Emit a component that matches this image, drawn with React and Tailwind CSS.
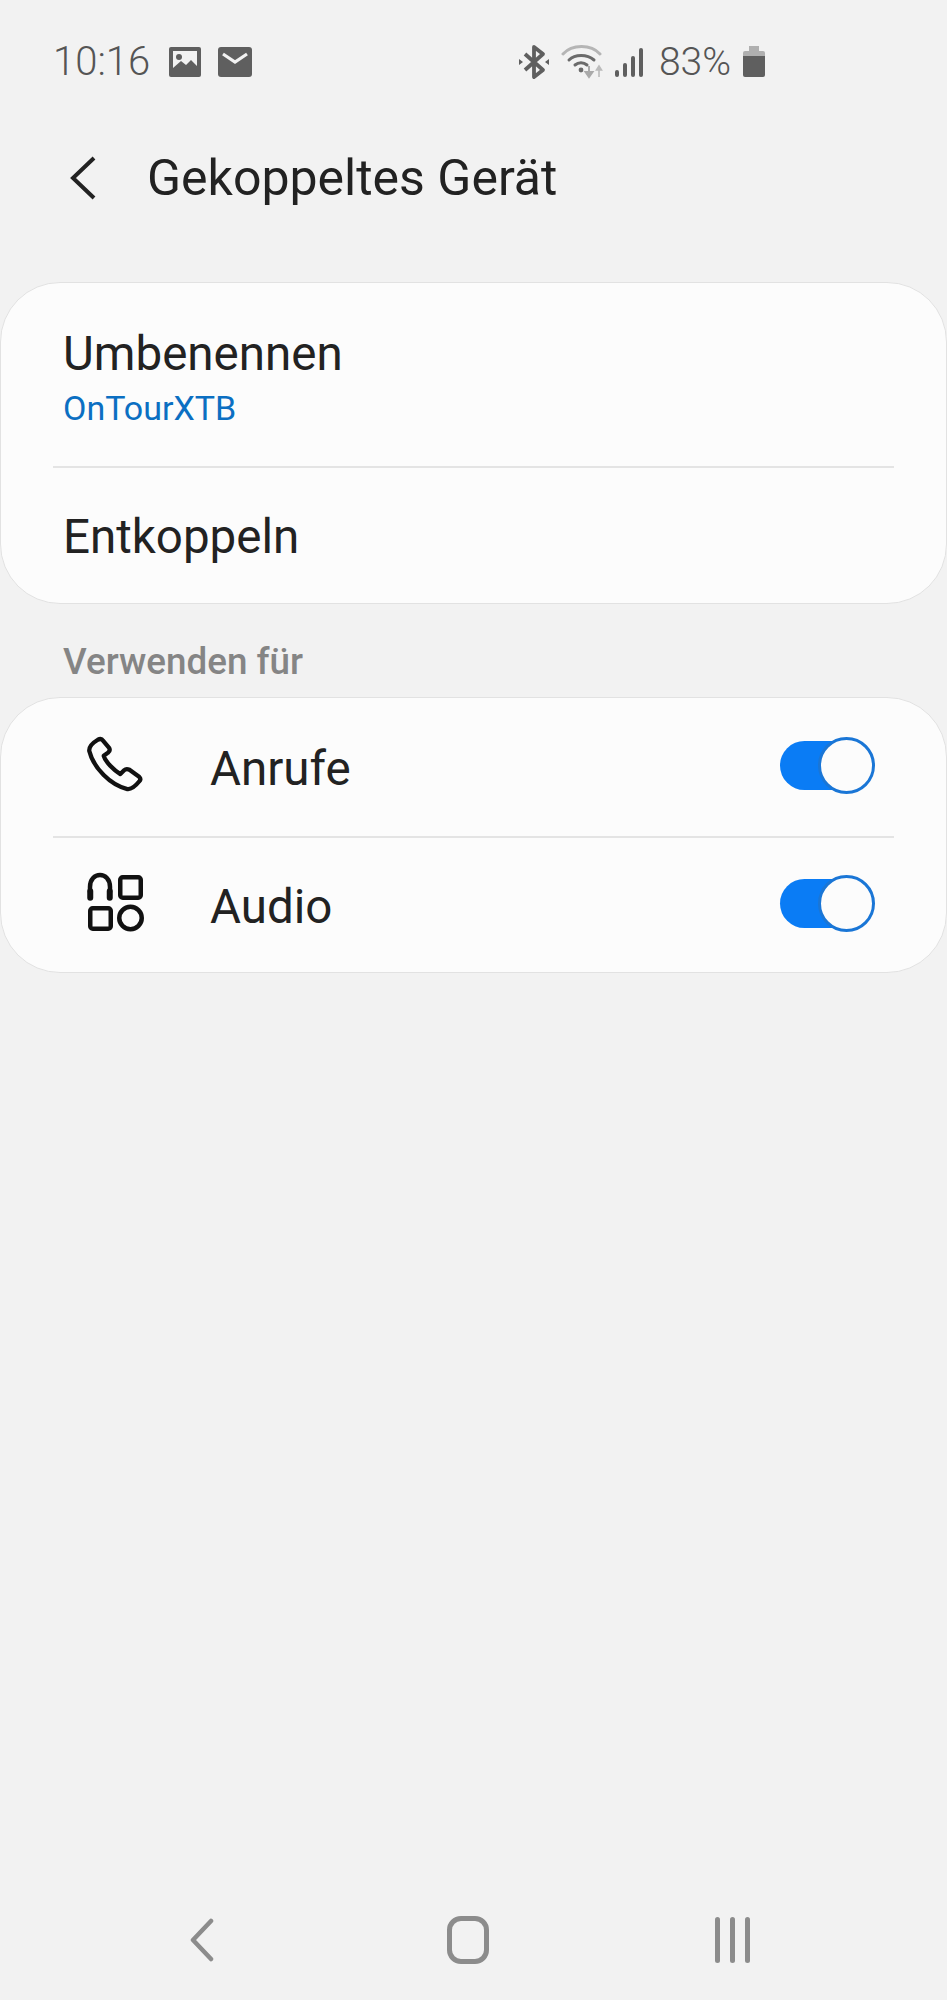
import React from "react";

const Toggle = () => (
  <div className="relative w-[95px] h-[57px] shrink-0 mb-[3px]">
    <div className="absolute left-0 top-[4px] w-[90px] h-[49px] rounded-full bg-[#0a7cf5]" />
    <div className="absolute right-0 top-0 w-[57px] h-[57px] rounded-full bg-[#fcfcfc] border-[3px] border-[#1a76d6]" />
  </div>
);

const PhoneIcon = () => (
  <svg width="60" height="60" viewBox="0 0 56 56" fill="none" stroke="#111" strokeWidth="4" strokeLinejoin="round" strokeLinecap="round">
    <path d="M4 14 C3.5 10 7 6.5 12 3.5 C14 2.5 16 3 17 4.5 L22.5 11 C23.5 13 23 14.5 21.5 15.5 L17.5 18.5 C19 24 27 32 33 35.5 L36.5 32 C38 30.5 39.5 30.5 41.5 31.5 L50.5 38 C52 39.5 52 41 50.5 42.5 C46.5 47.5 43.5 50 39.5 49.5 C24 46 8 30 4 14 Z" />
  </svg>
);

const AudioIcon = () => (
  <svg width="60" height="60" viewBox="0 0 60 60" fill="none" stroke="#111" strokeWidth="4.5" strokeLinejoin="round" strokeLinecap="round">
    <path d="M5 20 V15 C5 -1 25 -1 25 15 V20" />
    <rect x="3" y="17" width="4.5" height="11" rx="2.2" fill="#111" strokeWidth="1.5" />
    <rect x="22.5" y="17" width="4.5" height="11" rx="2.2" fill="#111" strokeWidth="1.5" />
    <rect x="35.25" y="5.25" width="20.5" height="20.5" rx="2.5" />
    <rect x="5.25" y="36.25" width="20.5" height="20.5" rx="2.5" />
    <circle cx="45.5" cy="46" r="11.25" />
  </svg>
);

const StatusIcons = () => (
  <div className="flex items-center">
    {/* bluetooth */}
    <svg width="32" height="36" viewBox="0 0 32 36" fill="none">
      <path d="M7 10 L25 26 L16 33 V3 L25 10 L7 26" stroke="#5f5f5f" strokeWidth="3.8" strokeLinejoin="round" />
      <path d="M1 15 L5 18 L1 21 Z M31 15 L27 18 L31 21 Z" fill="#5f5f5f" />
    </svg>
    {/* wifi */}
    <svg width="44" height="36" viewBox="0 0 44 36" fill="none" className="ml-[11px]">
      <path d="M2 10 C11 0 30 0 39 10" stroke="#b5b5b5" strokeWidth="3" strokeLinecap="round" />
      <path d="M8 16 C14 10 26 10 33 16" stroke="#6a6a6a" strokeWidth="3" strokeLinecap="round" />
      <path d="M14 21 C17.5 18 22.5 18 26 21" stroke="#6a6a6a" strokeWidth="3" strokeLinecap="round" />
      <circle cx="20" cy="26" r="2.4" fill="#6a6a6a" />
      <path d="M28 22 V30 M24.5 28 L28 33 L31.5 28 Z" stroke="#aaa" strokeWidth="2" fill="#aaa" />
      <path d="M38 33 V24 M35.5 26 L38 22 L40.5 26 Z" stroke="#bbb" strokeWidth="1.6" fill="#bbb" />
    </svg>
    {/* signal */}
    <div className="flex items-end gap-[4px] h-[29px] ml-[10px]">
      <div className="w-[4px] h-[7px] rounded-sm bg-[#5f5f5f]" />
      <div className="w-[4px] h-[14px] rounded-sm bg-[#5f5f5f]" />
      <div className="w-[4px] h-[21px] rounded-sm bg-[#5f5f5f]" />
      <div className="w-[4px] h-[29px] rounded-sm bg-[#5f5f5f]" />
    </div>
    <span className="ml-[16px] text-[39px] font-light leading-none text-[#555]">83%</span>
    {/* battery */}
    <div className="ml-[12px] mb-[2px] flex flex-col items-center">
      <div className="w-[10px] h-[5px] bg-[#b0b0b0]" />
      <div className="w-[22px] h-[5px] rounded-t-[2px] bg-[#b0b0b0]" />
      <div className="w-[22px] h-[21px] rounded-b-[2px] bg-[#5f5f5f]" />
    </div>
  </div>
);

export default function App() {
  return (
    <div
      className="relative min-h-[2000px] bg-[#f2f2f2] text-[#222] overflow-hidden"
      style={{ fontFamily: "Roboto, sans-serif" }}
    >
      {/* Status bar */}
      <div className="flex items-center justify-between h-[60px] mt-[32px] pl-[53px] pr-[182px]">
        <div className="flex items-center">
          <span className="text-[40px] font-light leading-none text-[#555] w-[96px]">10:16</span>
          <svg width="32" height="30" viewBox="0 0 32 30" className="ml-[20px] shrink-0">
            <rect width="32" height="30" rx="2" fill="#5f5f5f" />
            <rect x="4" y="4" width="24" height="19" fill="#f2f2f2" />
            <circle cx="10" cy="10" r="3" fill="#5f5f5f" />
            <path d="M4 24 L4 21 L12 14 L17 18 L22 13 L28 19 L28 24 Z" fill="#5f5f5f" />
          </svg>
          <svg width="34" height="30" viewBox="0 0 34 30" className="ml-[17px] shrink-0">
            <rect width="34" height="30" rx="3" fill="#5f5f5f" />
            <path d="M5 7 L17 15 L29 7" stroke="#f2f2f2" strokeWidth="3.2" fill="none" />
          </svg>
        </div>
        <StatusIcons />
      </div>

      {/* Header */}
      <div className="flex items-center h-[60px] mt-[56px] pl-[70px]">
        <svg width="26" height="44" viewBox="0 0 26 44" fill="none" stroke="#222" strokeWidth="4">
          <path d="M24 2 L3 22 L24 42" />
        </svg>
        <h1 className="ml-[51px] text-[50px] font-normal leading-none text-[#222]">Gekoppeltes Gerät</h1>
      </div>

      {/* Card 1 */}
      <div className="mt-[74px] h-[322px] rounded-[60px] bg-[#fcfcfc] border border-[#e2e2e2] flex flex-col">
        <div className="h-[183px] pl-[62px] pt-[41px]">
          <div className="text-[47.5px] leading-[60px] text-[#222]">Umbenennen</div>
          <div className="text-[34px] leading-[44px] mt-[2px] text-[#0b6fc2]">OnTourXTB</div>
        </div>
        <div className="mx-[52px] h-[2px] bg-[#e4e4e4]" />
        <div className="flex-1 flex items-center pl-[62px] pt-[4px]">
          <span className="text-[47.5px] leading-none text-[#222]">Entkoppeln</span>
        </div>
      </div>

      {/* Section label */}
      <div className="pl-[63px] mt-[36px] h-[57px] text-[36.8px] leading-[44px] font-medium text-[#858585]">Verwenden für</div>

      {/* Card 2 */}
      <div className="h-[276px] rounded-[60px] bg-[#fcfcfc] border border-[#e2e2e2] flex flex-col">
        <div className="h-[138px] flex items-center pl-[84px] pr-[71px]">
          <div className="w-[125px] mb-[3px]"><PhoneIcon /></div>
          <span className="flex-1 text-[47.5px] leading-none text-[#222] pt-[6px]">Anrufe</span>
          <Toggle />
        </div>
        <div className="mx-[52px] h-[2px] bg-[#e4e4e4]" />
        <div className="flex-1 flex items-center pl-[84px] pr-[71px]">
          <div className="w-[125px] mb-[6px]"><AudioIcon /></div>
          <span className="flex-1 text-[47.5px] leading-none text-[#222] pt-[6px]">Audio</span>
          <Toggle />
        </div>
      </div>

      {/* Nav bar */}
      <div className="absolute bottom-[35px] left-0 right-0 h-[50px] flex items-center">
        <svg width="26" height="44" viewBox="0 0 26 44" fill="none" stroke="#8c8c8c" strokeWidth="4.5" strokeLinecap="round" strokeLinejoin="round" className="ml-[189px]">
          <path d="M22 3 L4 22 L22 41" />
        </svg>
        <div className="ml-[232px] w-[42px] h-[48px] rounded-[14px] border-[5px] border-[#8c8c8c]" />
        <div className="ml-[226px] flex gap-[10px]">
          <div className="w-[5px] h-[46px] rounded-full bg-[#8c8c8c]" />
          <div className="w-[5px] h-[46px] rounded-full bg-[#8c8c8c]" />
          <div className="w-[5px] h-[46px] rounded-full bg-[#8c8c8c]" />
        </div>
      </div>
    </div>
  );
}
